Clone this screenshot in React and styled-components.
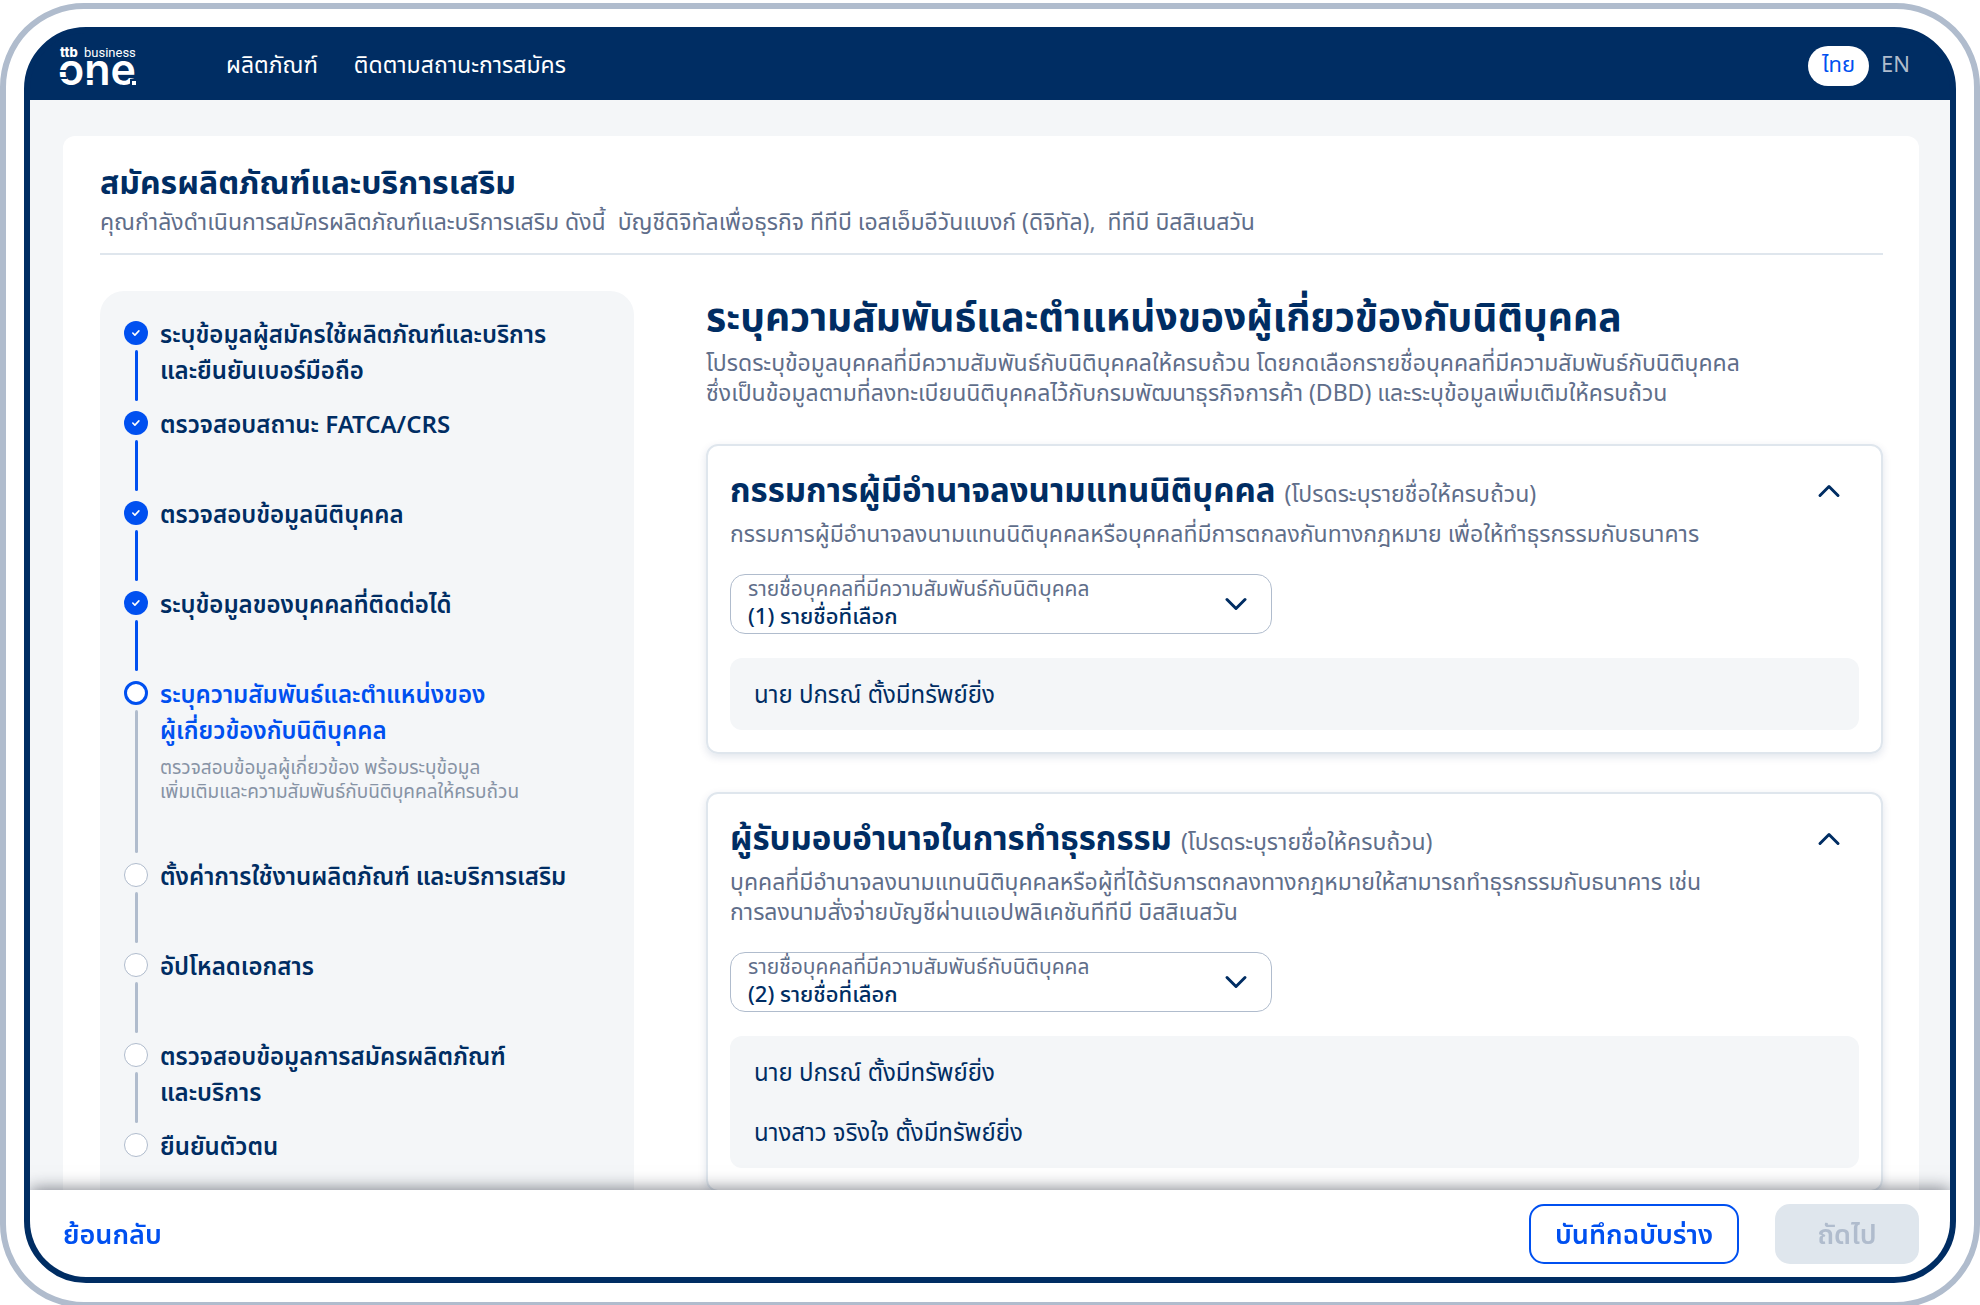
import { useState } from 'react';
import styled, { createGlobalStyle, css } from 'styled-components';

const navy = '#002d63';
const blue = '#0050f0';
const slate = '#5f6e8a';
const steel = '#b0bccd';
const line = '#dfe6ed';
const mist = '#f4f6f8';

const GlobalStyle = createGlobalStyle`
 *, *::before, *::after {
  box-sizing: border-box;
 }

 body {
  margin: 0;
  overflow: hidden;
  background-color: #fff;
  color: ${navy};
  font-family: 'Noto Sans Thai', 'Noto Sans', sans-serif;
 }

 h1, h2, h3, p, ul, ol {
  margin: 0;
  padding: 0;
 }

 ul, ol {
  list-style: none;
 }

 button, select {
  font-family: inherit;
  cursor: pointer;
 }
`;

/* outer ring of the device, then the dark one inside it */
const Page = styled.div`
 height: 100vh;
 padding-top: 3px;
 overflow: hidden;
`;

const Device = styled.div`
 height: 100vh;
 padding: 18px 18px 19px;
 border: 6px solid ${steel};
 border-radius: 84px;
`;

const Screen = styled.div`
 display: flex;
 flex-direction: column;
 height: 100%;
 overflow: hidden;
 border: 6px solid ${navy};
 border-radius: 62px;
 background-color: ${navy};
`;

const Header = styled.header`
 display: flex;
 align-items: center;
 flex-shrink: 0;
 height: 67px;
 padding: 0 28px 2px 30px;
`;

const LogoLink = styled.a`
 display: flex;
 margin-right: 88px;
`;

const Nav = styled.nav`
 display: flex;
 gap: 36px;
 margin-right: auto;
`;

const NavLink = styled.a`
 color: #fff;
 font-size: 23px;
 line-height: 36px;
 text-decoration: none;
 white-space: nowrap;
`;

const Languages = styled.div`
 display: flex;
 align-items: center;
`;

const Language = styled.button`
 height: 40px;
 padding: 0 ${({ $active }) => ($active ? 14 : 12)}px;
 border: 0;
 border-radius: 20px;
 background-color: ${({ $active }) => ($active ? '#fff' : 'transparent')};
 color: ${({ $active }) => ($active ? blue : steel)};
 font-size: 22px;
 line-height: 40px;
`;

const Content = styled.main`
 flex: 1;
 min-height: 0;
 padding: 36px 31px 0 33px;
 overflow-y: auto;
 scrollbar-width: none;
 background-color: ${mist};
`;

const Sheet = styled.div`
 padding: 28px 36px 36px 37px;
 border-radius: 12px;
 background-color: #fff;
`;

const SheetHead = styled.div`
 display: flex;
 flex-direction: column;
 gap: 4px;
 padding-bottom: 15px;
 border-bottom: 2px solid ${line};
`;

const SheetTitle = styled.h1`
 font-size: 32px;
 font-weight: 700;
 line-height: 40px;
`;

const Text = styled.p`
 color: ${slate};
 font-size: 23px;
 line-height: 30px;
 white-space: pre-line;
`;

const Columns = styled.div`
 display: grid;
 grid-template-columns: minmax(0, 534fr) minmax(0, 1177fr);
 gap: 72px;
 align-items: start;
 padding-top: 36px;
`;

const Steps = styled.ol`
 padding: 24px 24px 48px;
 border-radius: 24px;
 background-color: ${mist};
`;

const Step = styled.li`
 display: flex;
 gap: 12px;
 min-height: 90px;
`;

const Track = styled.div`
 display: flex;
 flex-direction: column;
 align-items: center;
 gap: 5px;
 width: 24px;
 padding: 6px 0 4px;
`;

const dotStyles = {
 done: css`
  background-color: ${blue};
 `,
 current: css`
  border: 3px solid ${blue};
  background-color: #fff;
 `,
 next: css`
  border: 1px solid ${steel};
  background-color: #fff;
 `,
};

const Dot = styled.span`
 display: flex;
 align-items: center;
 justify-content: center;
 flex-shrink: 0;
 width: 24px;
 height: 24px;
 border-radius: 50%;
 ${({ $state }) => dotStyles[$state]}
`;

const Rail = styled.span`
 flex: 1;
 width: 3px;
 border-radius: 2px;
 background-color: ${({ $done }) => ($done ? blue : steel)};
`;

const StepBody = styled.div`
 padding-top: 3px;
`;

const StepTitle = styled.h3`
 color: ${({ $current }) => ($current ? blue : navy)};
 font-size: 24px;
 font-weight: 600;
 line-height: 36px;
 white-space: pre-line;
`;

const StepNote = styled.p`
 padding: 7px 0 52px;
 color: #8793a5;
 font-size: 19px;
 line-height: 24px;
 white-space: pre-line;
`;

const Main = styled.div`
 display: flex;
 flex-direction: column;
 gap: 35px;
`;

const MainTitle = styled.h2`
 font-size: 39px;
 font-weight: 700;
 line-height: 58px;
`;

const Groups = styled.div`
 display: flex;
 flex-direction: column;
 gap: 38px;
`;

const Card = styled.section`
 display: flex;
 flex-direction: column;
 gap: 24px;
 padding: 25px 22px 22px;
 border: 2px solid ${line};
 border-radius: 12px;
 box-shadow: 0 3px 8px rgba(0, 45, 99, 0.12);
`;

const CardHead = styled.div`
 display: flex;
 align-items: flex-start;
 justify-content: space-between;
`;

const CardTitle = styled.h3`
 display: flex;
 align-items: baseline;
 gap: 9px;
 margin-bottom: 4px;
 font-size: 33px;
 font-weight: 700;
 line-height: 42px;
`;

const Hint = styled.span`
 color: ${slate};
 font-size: 23px;
 font-weight: 400;
`;

const Toggle = styled.button`
 display: flex;
 padding: 2px 12px;
 border: 0;
 background: none;
`;

const Field = styled.div`
 position: relative;
 width: 48%;
 height: 60px;
 border: 1px solid ${steel};
 border-radius: 15px;
`;

const FieldLabel = styled.label`
 position: absolute;
 top: 2px;
 left: 17px;
 color: ${slate};
 font-size: 21px;
 line-height: 26px;
 pointer-events: none;
`;

const Select = styled.select`
 width: 100%;
 height: 100%;
 padding: 26px 60px 0 17px;
 border: 0;
 border-radius: 15px;
 appearance: none;
 background: none;
 color: ${navy};
 font-size: 22px;
 font-weight: 500;
`;

const FieldIcon = styled.span`
 position: absolute;
 top: 11px;
 right: 17px;
 display: flex;
 pointer-events: none;
`;

const People = styled.ul`
 padding: 8px 24px 4px;
 border-radius: 12px;
 background-color: ${mist};
`;

const Person = styled.li`
 font-size: 24px;
 line-height: 60px;
`;

const Footer = styled.footer`
 display: flex;
 align-items: center;
 gap: 36px;
 padding: 14px 31px 13px 33px;
 z-index: 1;
 background-color: #fff;
 box-shadow: 0 -1px 16px rgba(20, 25, 40, 0.55);
`;

const Button = styled.button`
 min-width: 144px;
 height: 60px;
 padding: 2px 24px 0;
 border: 2px solid ${blue};
 border-radius: 15px;
 background-color: #fff;
 color: ${blue};
 font-size: 27px;
 font-weight: 600;

 &:disabled {
  border-color: ${line};
  background-color: ${line};
  color: ${steel};
  cursor: default;
 }
`;

const BackButton = styled(Button)`
 min-width: 0;
 margin-right: auto;
 padding: 2px 0 0;
 border: 0;
`;

const Logo = () => (
 <svg width="78" height="46" viewBox="0 -4 78 46" fill="#fff" overflow="visible" aria-hidden="true">
  <text x="0" y="10" fontFamily="Inter, sans-serif" fontSize="13" fontWeight="800">ttb</text>
  <text x="24" y="10" fontFamily="Roboto, sans-serif" fontSize="13">business</text>
  <text x="-2" y="38" fontFamily="Inter, sans-serif" fontSize="43" fontWeight="600">one</text>
  {/* gaps cut in the strokes */}
  <path d="M-1 24h8M-1 31h8M26 32h8" stroke={navy} strokeWidth="2" />
  <rect x="70" y="32" width="8" height="8" fill={navy} />
  <rect x="72" y="34" width="4" height="4" />
 </svg>
);

const Chevron = ({ up }) => (
 <svg width="36" height="36" viewBox="0 0 36 36" fill="none" stroke={navy} strokeWidth="3" strokeLinecap="round" strokeLinejoin="round" aria-hidden="true">
  <path d={up ? 'M9 22.5l9-9 9 9' : 'M9 13.5l9 9 9-9'} />
 </svg>
);

const Check = () => (
 <svg width="10" height="8" viewBox="0 0 10 8" fill="none" stroke="#fff" strokeWidth="1.6" strokeLinecap="round" strokeLinejoin="round" aria-hidden="true">
  <path d="M1.8 4l2.1 2.1 4-4.2" />
 </svg>
);

const steps = [
 { title: 'ระบุข้อมูลผู้สมัครใช้ผลิตภัณฑ์และบริการ\nและยืนยันเบอร์มือถือ', state: 'done' },
 { title: 'ตรวจสอบสถานะ FATCA/CRS', state: 'done' },
 { title: 'ตรวจสอบข้อมูลนิติบุคคล', state: 'done' },
 { title: 'ระบุข้อมูลของบุคคลที่ติดต่อได้', state: 'done' },
 {
  title: 'ระบุความสัมพันธ์และตำแหน่งของ\nผู้เกี่ยวข้องกับนิติบุคคล',
  note: 'ตรวจสอบข้อมูลผู้เกี่ยวข้อง พร้อมระบุข้อมูล\nเพิ่มเติมและความสัมพันธ์กับนิติบุคคลให้ครบถ้วน',
  state: 'current',
 },
 { title: 'ตั้งค่าการใช้งานผลิตภัณฑ์ และบริการเสริม', state: 'next' },
 { title: 'อัปโหลดเอกสาร', state: 'next' },
 { title: 'ตรวจสอบข้อมูลการสมัครผลิตภัณฑ์\nและบริการ', state: 'next' },
 { title: 'ยืนยันตัวตน', state: 'next' },
];

const groups = [
 {
  id: 'directors',
  title: 'กรรมการผู้มีอำนาจลงนามแทนนิติบุคคล',
  text: 'กรรมการผู้มีอำนาจลงนามแทนนิติบุคคลหรือบุคคลที่มีการตกลงกันทางกฎหมาย เพื่อให้ทำธุรกรรมกับธนาคาร',
  people: ['นาย ปกรณ์ ตั้งมีทรัพย์ยิ่ง'],
 },
 {
  id: 'attorneys',
  title: 'ผู้รับมอบอำนาจในการทำธุรกรรม',
  text: 'บุคคลที่มีอำนาจลงนามแทนนิติบุคคลหรือผู้ที่ได้รับการตกลงทางกฎหมายให้สามารถทำธุรกรรมกับธนาคาร เช่น\nการลงนามสั่งจ่ายบัญชีผ่านแอปพลิเคชันทีทีบี บิสสิเนสวัน',
  people: ['นาย ปกรณ์ ตั้งมีทรัพย์ยิ่ง', 'นางสาว จริงใจ ตั้งมีทรัพย์ยิ่ง'],
 },
];

const Group = ({ id, title, text, people }) => {
 const [open, setOpen] = useState(true);

 return (
  <Card>
   <CardHead>
    <div>
     <CardTitle>
      {title} <Hint>(โปรดระบุรายชื่อให้ครบถ้วน)</Hint>
     </CardTitle>
     <Text>{text}</Text>
    </div>
    <Toggle type="button" aria-label={title} aria-expanded={open} onClick={() => setOpen(!open)}>
     <Chevron up={open} />
    </Toggle>
   </CardHead>
   {open && (
    <>
     <Field>
      <FieldLabel htmlFor={id}>รายชื่อบุคคลที่มีความสัมพันธ์กับนิติบุคคล</FieldLabel>
      <Select id={id}>
       <option>({people.length}) รายชื่อที่เลือก</option>
      </Select>
      <FieldIcon>
       <Chevron />
      </FieldIcon>
     </Field>
     <People>
      {people.map((name) => (
       <Person key={name}>{name}</Person>
      ))}
     </People>
    </>
   )}
  </Card>
 );
};

const App = () => {
 const [lang, setLang] = useState('th');

 return (
  <Page>
   <GlobalStyle />
   <Device>
    <Screen>
     <Header>
      <LogoLink href="#" aria-label="ttb business one">
       <Logo />
      </LogoLink>
      <Nav>
       <NavLink href="#products">ผลิตภัณฑ์</NavLink>
       <NavLink href="#status">ติดตามสถานะการสมัคร</NavLink>
      </Nav>
      <Languages>
       <Language type="button" $active={lang === 'th'} onClick={() => setLang('th')}>ไทย</Language>
       <Language type="button" $active={lang === 'en'} onClick={() => setLang('en')}>EN</Language>
      </Languages>
     </Header>
     <Content>
      <Sheet>
       <SheetHead>
        <SheetTitle>สมัครผลิตภัณฑ์และบริการเสริม</SheetTitle>
        <Text>คุณกำลังดำเนินการสมัครผลิตภัณฑ์และบริการเสริม ดังนี้ &nbsp;บัญชีดิจิทัลเพื่อธุรกิจ ทีทีบี เอสเอ็มอีวันแบงก์ (ดิจิทัล), &nbsp;ทีทีบี บิสสิเนสวัน</Text>
       </SheetHead>
       <Columns>
        <Steps>
         {steps.map(({ title, note, state }, i) => (
          <Step key={title}>
           <Track>
            <Dot $state={state}>{state === 'done' && <Check />}</Dot>
            {i < steps.length - 1 && <Rail $done={state === 'done'} />}
           </Track>
           <StepBody>
            <StepTitle $current={state === 'current'}>{title}</StepTitle>
            {note && <StepNote>{note}</StepNote>}
           </StepBody>
          </Step>
         ))}
        </Steps>
        <Main>
         <div>
          <MainTitle>ระบุความสัมพันธ์และตำแหน่งของผู้เกี่ยวข้องกับนิติบุคคล</MainTitle>
          <Text>{'โปรดระบุข้อมูลบุคคลที่มีความสัมพันธ์กับนิติบุคคลให้ครบถ้วน โดยกดเลือกรายชื่อบุคคลที่มีความสัมพันธ์กับนิติบุคคล\nซึ่งเป็นข้อมูลตามที่ลงทะเบียนนิติบุคคลไว้กับกรมพัฒนาธุรกิจการค้า (DBD) และระบุข้อมูลเพิ่มเติมให้ครบถ้วน'}</Text>
         </div>
         <Groups>
          {groups.map((group) => (
           <Group key={group.id} {...group} />
          ))}
         </Groups>
        </Main>
       </Columns>
      </Sheet>
     </Content>
     <Footer>
      <BackButton type="button">ย้อนกลับ</BackButton>
      <Button type="button">บันทึกฉบับร่าง</Button>
      <Button type="button" disabled>ถัดไป</Button>
     </Footer>
    </Screen>
   </Device>
  </Page>
 );
};

export default App;
